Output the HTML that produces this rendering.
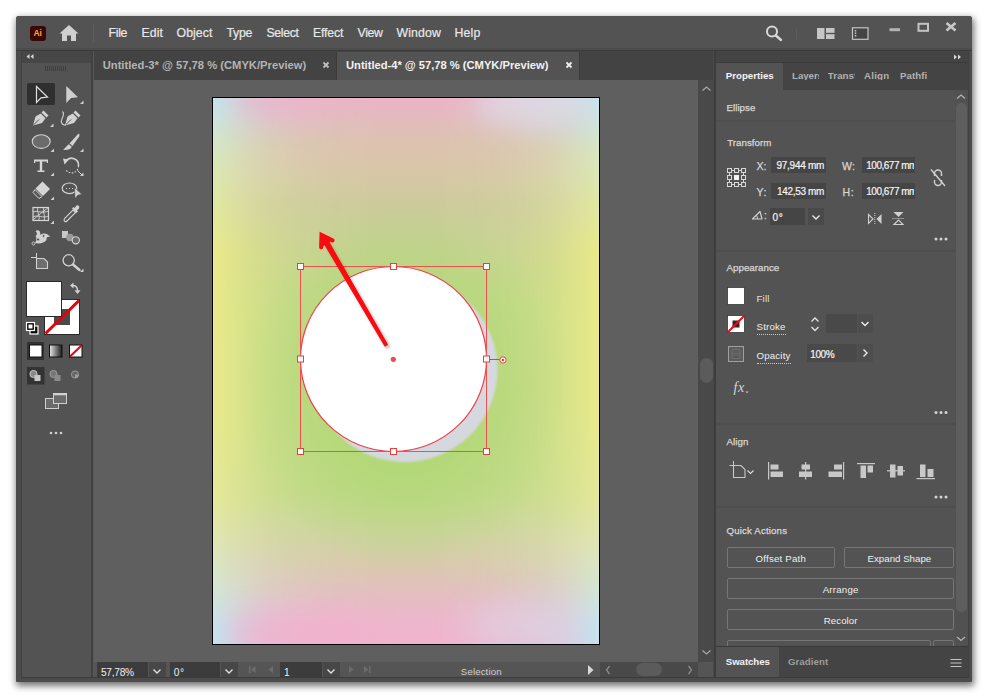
<!DOCTYPE html>
<html lang="en">
<head>
<meta charset="utf-8">
<title>Adobe Illustrator</title>
<style>
html,body{margin:0;padding:0;}
body{width:988px;height:698px;background:#fff;overflow:hidden;position:relative;font-family:"Liberation Sans",sans-serif;font-size:11px;color:#dcdcdc;}
.a{position:absolute;}
.t{position:absolute;white-space:nowrap;line-height:1;}
.win{left:16px;top:16px;width:956px;height:666px;background:#4b4b4b;border-radius:3px 3px 1px 1px;box-shadow:1px 3px 7px 1px rgba(0,0,0,.55);}
.menubar{left:16px;top:16px;width:956px;height:34px;background:#535353;border-radius:3px 3px 0 0;}
.mi{font-size:13px;top:26px;color:#e8e8e8;-webkit-text-stroke:.2px #e8e8e8;}
.pnl{background:#535353;}
.dk{background:#424242;}
.fld{background:#3c3c3c;}
.btn{border:1px solid #767676;border-radius:2px;box-sizing:border-box;text-align:center;color:#e8e8e8;}
.sec{color:#d8d8d8;font-size:11px;-webkit-text-stroke:.25px #d8d8d8;}
.lbl{color:#d6d6d6;font-size:10px;-webkit-text-stroke:.25px #d6d6d6;}
.val{color:#f4f4f4;font-size:10px;-webkit-text-stroke:.2px #f4f4f4;}
</style>
</head>
<body>
<div class="a win"></div>
<div class="a menubar"></div>
<div class="a" style="left:16px;top:48px;width:956px;height:2px;background:#4c4c4c"></div>
<div class="a" style="left:16px;top:50px;width:956px;height:1px;background:#3b3b3b"></div>

<!-- MENU -->
<div id="menu">
<svg class="a" style="left:30px;top:26px" width="16" height="15" viewBox="0 0 16 15"><rect x="0" y="0" width="16" height="15" rx="3" fill="#3a0606"/><text x="3.400" y="10.300" font-family="Liberation Sans, sans-serif" font-weight="bold" font-size="8.500" fill="#ffa826">Ai</text></svg>
<svg class="a" style="left:59px;top:24px" width="20" height="18" viewBox="0 0 20 18"><path d="M10 1 L0.5 9.5 L3 9.5 L3 17 L8 17 L8 11.5 L12 11.5 L12 17 L17 17 L17 9.5 L19.5 9.5 Z" fill="#d0d0d0"/></svg>
<div class="a" style="left:93px;top:24px;width:1px;height:18px;background:#5e5e5e"></div>
<svg class="a" style="left:760px;top:16px" width="212" height="34" viewBox="760 16 212 34">
 <circle cx="772" cy="31.500" r="5" fill="none" stroke="#d8d8d8" stroke-width="2"/>
 <path d="M775.800 35.500 L781 40" stroke="#d8d8d8" stroke-width="2.400" stroke-linecap="round"/>
 <path d="M796.500 28v12" stroke="#5c5c5c" stroke-width="1"/>
 <g fill="#c6c6c6"><rect x="817" y="28" width="7.500" height="11"/><rect x="826" y="28" width="8.500" height="4.800"/><rect x="826" y="34.200" width="8.500" height="4.800"/></g>
 <rect x="852.500" y="27.800" width="15.500" height="11.500" fill="#444" stroke="#c6c6c6" stroke-width="1.200"/>
 <path d="M855.500 30v7" stroke="#c6c6c6" stroke-width="1.600" stroke-dasharray="1.500 1"/>
 <rect x="889.500" y="28.200" width="10.500" height="3" fill="#b4b4b4"/>
 <rect x="918.500" y="23.800" width="9.500" height="7" fill="none" stroke="#c4c4c4" stroke-width="2"/>
 <path d="M946.500 23 L955.500 30.500 M955.500 23 L946.500 30.500" stroke="#c8c8c8" stroke-width="2.600"/>
</svg>
<span class="t mi" id="m0" style="left:108.50px;font-size:12.30px;letter-spacing:-0.309px;top:26.59px">File</span>
<span class="t mi" id="m1" style="left:141.50px;font-size:12.30px;letter-spacing:0.066px;top:26.59px">Edit</span>
<span class="t mi" id="m2" style="left:176.50px;font-size:12.30px;letter-spacing:0.071px;top:26.59px">Object</span>
<span class="t mi" id="m3" style="left:226.50px;font-size:12.30px;letter-spacing:-0.257px;top:26.59px">Type</span>
<span class="t mi" id="m4" style="left:266.50px;font-size:12.30px;letter-spacing:-0.358px;top:26.59px">Select</span>
<span class="t mi" id="m5" style="left:313.00px;font-size:12.30px;letter-spacing:-0.164px;top:26.59px">Effect</span>
<span class="t mi" id="m6" style="left:357.50px;font-size:12.30px;letter-spacing:-0.346px;top:26.59px">View</span>
<span class="t mi" id="m7" style="left:396.50px;font-size:12.30px;letter-spacing:0.130px;top:26.59px">Window</span>
<span class="t mi" id="m8" style="left:454.50px;font-size:12.30px;letter-spacing:0.201px;top:26.59px">Help</span>
</div>

<!-- TOOLBAR -->
<div id="toolbar">
<div class="a" style="left:21px;top:51px;width:72px;height:627px;background:#414141"></div>
<div class="a dk" style="left:22px;top:51px;width:69px;height:12px;background:#464646"></div>
<div class="a pnl" style="left:22px;top:63px;width:69px;height:614px"></div>
<div class="a" style="left:93px;top:51px;width:1px;height:627px;background:#585858"></div>
<svg class="a" style="left:16px;top:50px" width="80" height="632" viewBox="16 50 80 632">
 <!-- collapse chevrons -->
 <path d="M29.5 54 L26.5 56.5 L29.5 59 Z M33.5 54 L30.5 56.5 L33.5 59 Z" fill="#d8d8d8"/>
 <!-- grip -->
 <g stroke="#3e3e3e" stroke-width="1"><path d="M45.5 66V71M47.5 66V71M49.5 66V71M51.5 66V71M53.5 66V71M55.5 66V71M57.5 66V71M59.5 66V71M61.5 66V71M63.5 66V71M65.5 66V71"/></g>
 <!-- selection tool -->
 <rect x="27" y="83" width="28" height="22" rx="2" fill="#2f2f2f"/>
 <path d="M36.5 86.5 L47.5 97 L41 97.8 L36.5 102.5 Z" fill="none" stroke="#e0e0e0" stroke-width="1.2" stroke-linejoin="miter"/>
 <!-- direct selection -->
 <path d="M66.3 86 L78 97.3 L71 98 L66.3 103 Z" fill="#cfcfcf"/>
 <path d="M83.5 100.5V104H80Z" fill="#d0d0d0"/>
 <!-- pen -->
 <g fill="#d2d2d2">
 <path d="M43.5 110.5 L48.5 115.5 L46.5 117.5 L41.5 112.5 Z"/>
 <path d="M40.8 113.5 L45.5 118.2 L42 123 L33 125.5 L35.5 116.5 Z"/>
 <path d="M53.5 123.5V127H50Z"/>
 </g>
 <path d="M33.5 125 L39 119.5" stroke="#535353" stroke-width="1"/>
 <!-- curvature -->
 <g fill="#d2d2d2">
 <path d="M75.5 110.5 L80.5 115.5 L78.5 117.5 L73.5 112.5 Z"/>
 <path d="M72.8 113.5 L77.5 118.2 L74 123 L65 125.5 L67.5 116.5 Z"/>
 </g>
 <path d="M65.5 125 L71 119.5" stroke="#535353" stroke-width="1"/>
 <path d="M62.5 111.5 C66 115 60 119 61.5 122.5 C62.5 125 64.5 125.5 66 124.5" fill="none" stroke="#d2d2d2" stroke-width="1.1"/>
 <!-- ellipse -->
 <ellipse cx="41.2" cy="141.6" rx="9" ry="6.8" fill="#6b6b6b" stroke="#d0d0d0" stroke-width="1.1"/>
 <path d="M54 148.5V152H50.5Z" fill="#d0d0d0"/>
 <!-- paintbrush -->
 <g fill="#d2d2d2">
 <path d="M78.5 133.5 C79.5 134 79.8 135 79.2 136.5 L72.5 146 L69.5 143.5 Z"/>
 <path d="M68.8 144.3 L71.8 146.8 C71 149.5 67 150.2 63 149.8 C65.5 148.5 66 146 68.8 144.3 Z"/>
 <path d="M83.5 148.5V152H80Z"/>
 </g>
 <!-- type -->
 <path d="M34 159.5 H48 V163 H46.8 V161.5 H42.2 V170.5 H44.5 V172 H37.5 V170.5 H39.8 V161.5 H35.2 V163 H34 Z" fill="#d6d6d6"/>
 <path d="M54 172.5V176H50.5Z" fill="#d0d0d0"/>
 <!-- rotate -->
 <path d="M66 161 A7 7 0 0 1 78.5 166" fill="none" stroke="#d2d2d2" stroke-width="1.6"/>
 <path d="M78.5 166 A7 7 0 0 1 65.5 169.5" fill="none" stroke="#d2d2d2" stroke-width="1.2" stroke-dasharray="1.5 1.5"/>
 <path d="M63 158.5 L69 159.5 L64.5 164.5 Z" fill="#d2d2d2"/>
 <path d="M77.5 170.5 L82 175" stroke="#d2d2d2" stroke-width="1"/>
 <path d="M83.5 172.5V176H80Z" fill="#d0d0d0"/>
 <!-- eraser -->
 <path d="M42.5 181.5 L50 189 L43 196 L35.5 188.5 Z" fill="#d6d6d6"/>
 <path d="M35 189.5 L42 196.5 L39 198.5 L33 192.5 Z" fill="#5a5a5a" stroke="#d6d6d6" stroke-width="1"/>
 <path d="M54 196.500V200H50.500Z" fill="#d0d0d0"/>
 <!-- shape builder -->
 <ellipse cx="69.5" cy="188.3" rx="7.3" ry="5.3" fill="none" stroke="#d2d2d2" stroke-width="1.2"/>
 <path d="M66 188.5h1M69 188.500h1M72 188.500h1" stroke="#d2d2d2" stroke-width="1.2"/>
 <path d="M74.5 187.500 L82 194.500 L78 195 L75 198.500 Z" fill="#d2d2d2" stroke="#535353" stroke-width=".6"/>
 <!-- mesh -->
 <rect x="33" y="207.500" width="15.5" height="13" fill="#5c5c5c" stroke="#d6d6d6" stroke-width="1.2"/>
 <path d="M33 212 C38 210 42 214 48.500 211 M33 217 C38 214 43 219 48.500 216 M38 207.500 C36 212 41 216 38.500 220.500 M44 207.500 C42 212 46 216 44 220.500 M33 220 L41 213 L48 208" fill="none" stroke="#d6d6d6" stroke-width=".9"/>
 <path d="M54 220.500V224H50.500Z" fill="#d0d0d0"/>
 <!-- eyedropper -->
 <path d="M76.500 205.500 C78.500 204.500 80 206.500 79 208.500 L77 210.500 L78 211.500 L76.500 213 L72 208.500 L73.500 207 L74.500 208 Z" fill="#d2d2d2"/>
 <path d="M73 210 L75.500 212.500 L67 221 C65.500 222.500 63 221 64.500 218.500 Z" fill="#535353" stroke="#d2d2d2" stroke-width="1.1"/>
 <!-- puppet warp -->
 <path d="M35.500 231 C39 229 41 232 40 235 C43 232.500 47 233 50.500 237 C48 236 46 237 46.500 240 C44 243 40 244 35 243 C37 240 37 238 35.500 236 C37.500 235 37.500 233 35.500 231 Z" fill="#d2d2d2"/>
 <circle cx="38" cy="239.500" r="1.600" fill="#535353" stroke="#d2d2d2" stroke-width=".9"/>
 <circle cx="43.500" cy="236" r="1.400" fill="#535353" stroke="#d2d2d2" stroke-width=".9"/>
 <circle cx="33.500" cy="243.500" r="1.500" fill="#535353" stroke="#d2d2d2" stroke-width=".9"/>
 <!-- blend -->
 <rect x="62" y="231" width="6" height="7" fill="#c8c8c8"/>
 <circle cx="70" cy="237.500" r="3.800" fill="#9a9a9a"/>
 <circle cx="75.800" cy="240.300" r="3.600" fill="#6a6a6a" stroke="#d6d6d6" stroke-width="1.100"/>
 <!-- artboard -->
 <path d="M36.500 253V259M31 257.500H36" stroke="#d2d2d2" stroke-width="1"/>
 <path d="M36.500 258.500 H44 L47.500 262 V268.500 H36.500 Z" fill="#6e6e6e" stroke="#d2d2d2" stroke-width="1.100"/>
 <!-- zoom -->
 <circle cx="68.700" cy="260.300" r="5.600" fill="none" stroke="#d2d2d2" stroke-width="1.300"/>
 <path d="M73 264.500 L79.500 270" stroke="#d2d2d2" stroke-width="2.400" stroke-linecap="round"/>
 <path d="M83.500 268.500V272H80Z" fill="#d0d0d0"/>
 <!-- fill / stroke -->
 <rect x="44.500" y="299.500" width="35" height="35" fill="#fff" stroke="#2a2a2a" stroke-width="1"/>
 <rect x="54" y="309" width="16" height="16" fill="#4a4a4a"/>
 <path d="M45.500 333.500 L79 300.500" stroke="#e60008" stroke-width="3"/>
 <rect x="26.500" y="281.500" width="35" height="35" fill="#fff" stroke="#2a2a2a" stroke-width="1"/>
 <!-- swap -->
 <path d="M72.500 285.500 C76 285.500 77.500 287 77.500 290.500" fill="none" stroke="#d2d2d2" stroke-width="1.500"/>
 <path d="M70 285.500 L73.500 282.500 V288.500 Z M77.500 294 L74.500 290.200 H80.500 Z" fill="#d2d2d2"/>
 <!-- default fill stroke -->
 <rect x="30" y="326" width="8" height="8" fill="#0a0a0a" stroke="#fff" stroke-width="1.200"/>
 <rect x="26.500" y="322.500" width="8" height="8" fill="#0a0a0a" stroke="#fff" stroke-width="1.200"/>
 <rect x="28.500" y="324.500" width="4" height="4" fill="#fff"/>
 <!-- color / gradient / none -->
 <defs><linearGradient id="g1" x1="0" x2="1" y1="0" y2="0"><stop offset="0" stop-color="#e8e8e8"/><stop offset="1" stop-color="#1a1a1a"/></linearGradient></defs>
 <rect x="27" y="342" width="17" height="18" fill="#333"/>
 <rect x="29.500" y="345" width="12.500" height="12" fill="#fff" stroke="#111" stroke-width="1"/>
 <rect x="49.500" y="345" width="12.500" height="12" fill="url(#g1)" stroke="#111" stroke-width="1"/>
 <rect x="69.500" y="345" width="12.500" height="12" fill="#fff" stroke="#111" stroke-width="1"/>
 <path d="M70 356.500 L81.500 345.500" stroke="#e8000c" stroke-width="2"/>
 <!-- draw modes -->
 <rect x="27" y="367" width="17.500" height="17.500" fill="#333"/>
 <circle cx="33.500" cy="374" r="3.600" fill="#888" stroke="#c8c8c8" stroke-width="1"/>
 <rect x="34.500" y="375" width="6" height="6" fill="#c8c8c8"/>
 <circle cx="53.500" cy="374" r="3.600" fill="#777" stroke="#9a9a9a" stroke-width="1"/>
 <rect x="54.500" y="375" width="6" height="6" fill="#8a8a8a"/>
 <circle cx="75" cy="374.500" r="3.600" fill="#666" stroke="#9a9a9a" stroke-width="1"/>
 <path d="M75 374.500 h3.500 a3.500 3.500 0 0 1 -3.500 3.500Z" fill="#a0a0a0"/>
 <!-- screen mode -->
 <rect x="45.500" y="398.500" width="13" height="10" fill="#6a6a6a" stroke="#d0d0d0" stroke-width="1"/>
 <rect x="53.500" y="393.500" width="13" height="10" fill="#6a6a6a" stroke="#d0d0d0" stroke-width="1"/>
 <path d="M53.500 394.500h13" stroke="#d0d0d0" stroke-width="1.600"/>
 <!-- more -->
 <circle cx="51" cy="433" r="1.300" fill="#d0d0d0"/><circle cx="56" cy="433" r="1.300" fill="#d0d0d0"/><circle cx="61" cy="433" r="1.300" fill="#d0d0d0"/>
</svg>
</div>

<!-- DOC TABS -->
<div id="tabs">
<div class="a" style="left:94px;top:51px;width:619px;height:29px;background:#434343"></div>
<div class="a pnl" style="left:337px;top:52px;width:242px;height:28px"></div>
<div class="a" style="left:336px;top:52px;width:1px;height:28px;background:#3a3a3a"></div>
<div class="a" style="left:579px;top:52px;width:1px;height:28px;background:#3a3a3a"></div>
<span class="t" id="tab1" style="left:102.70px;top:59.52px;font-size:11.20px;font-weight:bold;color:#b4b4b4;letter-spacing:0.014px">Untitled-3* @ 57,78 % (CMYK/Preview)</span>
<span class="t" id="tab2" style="left:346.00px;top:59.52px;font-size:11.20px;font-weight:bold;color:#f2f2f2;letter-spacing:-0.018px">Untitled-4* @ 57,78 % (CMYK/Preview)</span>
<svg class="a" style="left:320px;top:58px" width="260" height="14" viewBox="320 58 260 14"><path d="M323.5 62.500l5 5m0-5l-5 5" stroke="#c0c0c0" stroke-width="1.800"/><path d="M566.500 62.500l5 5m0-5l-5 5" stroke="#f0f0f0" stroke-width="1.800"/></svg>
</div>

<!-- CANVAS -->
<div id="canvas">
<div class="a" style="left:94px;top:80px;width:604px;height:582px;background:#5f5f5f"></div>
<div class="a" style="left:698px;top:80px;width:16px;height:582px;background:#494949"></div>
<div class="a" style="left:699.500px;top:357.500px;width:13.500px;height:25.500px;border-radius:6.500px;background:#5b5b5b"></div>
<svg class="a" style="left:698px;top:80px" width="15" height="582" viewBox="698 80 15 582"><path d="M702.500 90.500l4-3.500l4 3.500M702.500 650.500l4 3.500l4-3.500" fill="none" stroke="#a8a8a8" stroke-width="1.300"/></svg>
<svg class="a" style="left:212px;top:97px" width="388" height="548" viewBox="212 97 388 548">
<defs>
 <linearGradient id="edge" x1="0" y1="0" x2="0" y2="1">
  <stop offset="0" stop-color="#c4e4ee"/><stop offset="0.04" stop-color="#cce6e0"/><stop offset="0.1" stop-color="#d8e8c0"/><stop offset="0.19" stop-color="#e2e8a4"/><stop offset="0.28" stop-color="#eaea8a"/><stop offset="0.6" stop-color="#eaea8c"/><stop offset="0.74" stop-color="#e6e89c"/><stop offset="0.82" stop-color="#e0e6b8"/><stop offset="0.9" stop-color="#d4e6d6"/><stop offset="0.96" stop-color="#c8e4ee"/><stop offset="1" stop-color="#c4e4f2"/>
 </linearGradient>
 <linearGradient id="mid" x1="0" y1="0" x2="0" y2="1">
  <stop offset="0" stop-color="#ecb2c6"/><stop offset="0.04" stop-color="#e3bbbd"/><stop offset="0.077" stop-color="#dcc2b0"/><stop offset="0.114" stop-color="#dac4ac"/><stop offset="0.152" stop-color="#d4c8a4"/><stop offset="0.196" stop-color="#ccca9c"/><stop offset="0.242" stop-color="#c8ce98"/><stop offset="0.297" stop-color="#c4d292"/><stop offset="0.34" stop-color="#c0d58c"/><stop offset="0.4" stop-color="#bed888"/><stop offset="0.68" stop-color="#bed988"/><stop offset="0.72" stop-color="#c0d88a"/><stop offset="0.76" stop-color="#c6d694"/><stop offset="0.8" stop-color="#ced2a0"/><stop offset="0.84" stop-color="#d6ccaa"/><stop offset="0.88" stop-color="#dec4b6"/><stop offset="0.92" stop-color="#e6bcc4"/><stop offset="0.96" stop-color="#eeb6cc"/><stop offset="1" stop-color="#f0b4cc"/>
 </linearGradient>
 <linearGradient id="hm" x1="0" y1="0" x2="1" y2="0">
  <stop offset="0" stop-color="#fff" stop-opacity="0"/><stop offset="0.04" stop-color="#fff" stop-opacity="0.2"/><stop offset="0.09" stop-color="#fff" stop-opacity="0.45"/><stop offset="0.15" stop-color="#fff" stop-opacity="0.68"/><stop offset="0.23" stop-color="#fff" stop-opacity="0.86"/><stop offset="0.32" stop-color="#fff" stop-opacity="0.96"/><stop offset="0.42" stop-color="#fff" stop-opacity="1"/><stop offset="0.58" stop-color="#fff" stop-opacity="1"/><stop offset="0.68" stop-color="#fff" stop-opacity="0.96"/><stop offset="0.77" stop-color="#fff" stop-opacity="0.86"/><stop offset="0.85" stop-color="#fff" stop-opacity="0.68"/><stop offset="0.91" stop-color="#fff" stop-opacity="0.45"/><stop offset="0.96" stop-color="#fff" stop-opacity="0.2"/><stop offset="1" stop-color="#fff" stop-opacity="0"/>
 </linearGradient>
 <mask id="mk"><rect x="213" y="98" width="386" height="546" fill="url(#hm)"/></mask>
 <radialGradient id="grn" cx="405" cy="385" r="1" gradientUnits="userSpaceOnUse" gradientTransform="translate(405 385) scale(165 185) translate(-405 -385)">
  <stop offset="0" stop-color="#b1d874" stop-opacity=".95"/><stop offset=".45" stop-color="#b1d874" stop-opacity=".8"/><stop offset=".75" stop-color="#b4d878" stop-opacity=".35"/><stop offset="1" stop-color="#b8d880" stop-opacity="0"/>
 </radialGradient>
 <clipPath id="abclip"><rect x="213" y="98" width="386" height="546"/></clipPath>
 <filter id="bl3" x="-50%" y="-100%" width="200%" height="300%"><feGaussianBlur stdDeviation="14"/></filter>
 <filter id="bl" x="-10%" y="-10%" width="120%" height="120%"><feGaussianBlur stdDeviation="1.2"/></filter>
 <filter id="bl2" x="-20%" y="-20%" width="140%" height="140%"><feGaussianBlur stdDeviation="1.5"/></filter>
</defs>
<rect x="212.500" y="97.500" width="387" height="547" fill="url(#edge)" stroke="#000" stroke-width="1"/>
<rect x="213" y="98" width="386" height="546" fill="url(#mid)" mask="url(#mk)"/>
<ellipse cx="405" cy="385" rx="165" ry="185" fill="url(#grn)"/>
<g clip-path="url(#abclip)" filter="url(#bl3)">
 <ellipse cx="285" cy="100" rx="45" ry="16" fill="#ecb2c8" opacity=".75"/>
 <ellipse cx="532" cy="104" rx="60" ry="22" fill="#dcdee8" opacity=".8"/>
 <ellipse cx="300" cy="634" rx="70" ry="22" fill="#f2aecb" opacity=".7"/>
 <ellipse cx="520" cy="626" rx="55" ry="24" fill="#dcd6e4" opacity=".55"/>
</g>
<rect x="212.500" y="97.500" width="387" height="547" fill="none" stroke="#000" stroke-width="1"/>
<!-- shadow circle -->
<ellipse cx="404.500" cy="369.500" rx="93" ry="92.500" fill="#d5d8de" filter="url(#bl)"/>
<ellipse cx="393.500" cy="359" rx="93" ry="92.500" fill="#fff"/>
<ellipse cx="393.500" cy="359" rx="93" ry="92.500" fill="none" stroke="#f0404a" stroke-width="1.200"/>
<rect x="300.500" y="266.500" width="186" height="185" fill="none" stroke="#f0504e" stroke-width="1"/>
<g fill="#fff" stroke="#e8403c" stroke-width="1">
 <rect x="297.500" y="263.500" width="6" height="6"/><rect x="390.500" y="263.500" width="6" height="6"/><rect x="483.500" y="263.500" width="6" height="6"/>
 <rect x="297.500" y="356" width="6" height="6"/><rect x="483.500" y="356" width="6" height="6"/>
 <rect x="297.500" y="448.500" width="6" height="6"/><rect x="390.500" y="448.500" width="6" height="6"/><rect x="483.500" y="448.500" width="6" height="6"/>
</g>
<path d="M490 359.500H499.500" stroke="#e8403c" stroke-width="1"/>
<circle cx="503" cy="360" r="3.200" fill="#fff" stroke="#e8403c" stroke-width="1"/>
<circle cx="503" cy="360" r="1.300" fill="#e8403c"/>
<circle cx="393.300" cy="359.300" r="2.600" fill="#f04a50"/>
<!-- arrow -->
<g filter="url(#bl2)" opacity=".3"><path d="M388.500 348 L326 241" stroke="#300" stroke-width="4.500"/></g>
<path d="M387.300 344.600 L385 346 L320.800 237.600 L324.800 235.300 Z" fill="#fb0a10" stroke="#fb0a10" stroke-width="1.200" stroke-linejoin="round"/>
<path d="M332.500 240.300 L321.600 235 L321.200 247.300" fill="#fb0a10" stroke="#fb0a10" stroke-width="4.200" stroke-linecap="round" stroke-linejoin="miter"/>
</svg>
</div>

<!-- STATUS -->
<div id="status">
<div class="a" style="left:94px;top:662px;width:619px;height:15px;background:#555"></div>
<div class="a fld" style="left:97px;top:662px;width:51px;height:15px"></div>
<div class="a" style="left:149px;top:662px;width:17px;height:15px;background:#474747"></div>
<div class="a fld" style="left:170px;top:662px;width:50px;height:15px"></div>
<div class="a" style="left:221px;top:662px;width:17px;height:15px;background:#474747"></div>
<div class="a fld" style="left:280px;top:662px;width:42px;height:15px"></div>
<div class="a" style="left:323px;top:662px;width:17px;height:15px;background:#474747"></div>
<div class="a" style="left:600px;top:662px;width:98px;height:15px;background:#494949"></div>
<div class="a" style="left:636px;top:663px;width:26px;height:13px;border-radius:7px;background:#5b5b5b"></div>
<span class="t" id="st0" style="left:100.90px;top:668.37px;font-size:10.20px;color:#efefef;letter-spacing:-0.252px">57,78%</span>
<span class="t" id="st1" style="left:173.80px;top:668.37px;font-size:10.20px;color:#efefef;letter-spacing:0.600px">0°</span>
<span class="t" id="st2" style="left:284.00px;top:668.37px;font-size:10.20px;color:#efefef;letter-spacing:0.000px">1</span>
<span class="t" id="sel" style="left:460.80px;top:666.79px;font-size:9.70px;color:#d0d0d0;letter-spacing:0.118px">Selection</span>
<svg class="a" style="left:94px;top:662px" width="619" height="15" viewBox="94 662 619 15">
 <g fill="none" stroke="#e0e0e0" stroke-width="1.400"><path d="M153.500 669.500l3.500 3.500l3.500-3.500M225.500 669.500l3.500 3.500l3.500-3.500M327.500 669.500l3.500 3.500l3.500-3.500"/></g>
 <g fill="#6c6c6c"><path d="M249 666h1.500v7H249zM255.500 666v7l-4.500-3.500zM273 666v7l-4.500-3.500zM349 666v7l4.500-3.500zM364 666v7l4.500-3.500zM369 666h1.500v7H369z"/></g>
 <path d="M588 665v10l5.500-5z" fill="#d8d8d8"/>
 <path d="M609.500 666l-3 4l3 4M688.500 666l3 4l-3 4" fill="none" stroke="#8a8a8a" stroke-width="1.300"/>
</svg>
</div>

<!-- RIGHT PANELS -->
<div id="panels">
<div class="a" style="left:714px;top:51px;width:3px;height:627px;background:#3d3d3d"></div>
<div class="a" style="left:716px;top:51px;width:252px;height:39px;background:#444"></div>
<div class="a" style="left:716px;top:62px;width:252px;height:1px;background:#3a3a3a"></div>
<div class="a pnl" style="left:716px;top:63px;width:67px;height:28px"></div>
<div class="a pnl" style="left:716px;top:90px;width:252px;height:556px"></div>
<!-- panel scrollbar -->
<div class="a" style="left:955px;top:90px;width:13px;height:556px;background:#515151"></div>
<div class="a" style="left:956px;top:103px;width:11px;height:509px;border-radius:5px;background:#5e5e5e"></div>
<!-- separators -->
<div class="a" style="left:716px;top:120px;width:239px;height:2px;background:#4e4e4e"></div>
<div class="a" style="left:716px;top:250px;width:239px;height:2px;background:#4e4e4e"></div>
<div class="a" style="left:716px;top:423px;width:239px;height:2px;background:#4e4e4e"></div>
<div class="a" style="left:716px;top:506px;width:239px;height:2px;background:#4e4e4e"></div>
<!-- tabs text -->
<span class="t" id="pt0" style="left:725.80px;top:70.79px;font-size:9.70px;font-weight:bold;color:#f4f4f4;letter-spacing:-0.002px">Properties</span>
<span class="t" id="pt1" style="left:792.10px;top:70.79px;font-size:9.70px;font-weight:bold;color:#b2b2b2;width:27px;overflow:hidden;letter-spacing:-0.070px">Layers</span>
<span class="t" id="pt2" style="left:827.80px;top:70.79px;font-size:9.70px;font-weight:bold;color:#b2b2b2;width:27px;overflow:hidden;letter-spacing:0.091px">Transform</span>
<span class="t" id="pt3" style="left:864.00px;top:70.79px;font-size:9.70px;font-weight:bold;color:#b2b2b2;width:27px;overflow:hidden;letter-spacing:0.245px">Align</span>
<span class="t" id="pt4" style="left:900.10px;top:70.79px;font-size:9.70px;font-weight:bold;color:#b2b2b2;width:27px;overflow:hidden;letter-spacing:0.044px">Pathfinder</span>
<!-- section titles -->
<span class="t sec" id="s0" style="left:726.60px;top:102.69px;font-size:9.70px;letter-spacing:0.026px">Ellipse</span>
<span class="t sec" id="s1" style="left:727.20px;top:137.79px;font-size:9.70px;letter-spacing:0.052px">Transform</span>
<span class="t sec" id="s2" style="left:726.50px;top:263.49px;font-size:9.70px;letter-spacing:0.050px">Appearance</span>
<span class="t sec" id="s3" style="left:726.50px;top:436.79px;font-size:9.70px;letter-spacing:0.088px">Align</span>
<span class="t sec" id="s4" style="left:726.50px;top:525.79px;font-size:9.70px;letter-spacing:0.151px">Quick Actions</span>
<!-- transform fields -->
<div class="a" style="left:771px;top:157px;width:55px;height:16px;background:#454545"></div>
<div class="a" style="left:771px;top:183px;width:55px;height:16px;background:#454545"></div>
<div class="a" style="left:862px;top:157px;width:53px;height:16px;background:#454545"></div>
<div class="a" style="left:862px;top:183px;width:53px;height:16px;background:#454545"></div>
<div class="a" style="left:770px;top:208px;width:35px;height:17px;background:#454545"></div>
<div class="a" style="left:808px;top:208px;width:16px;height:17px;background:#4a4a4a"></div>
<span class="t lbl" id="lx" style="left:756.50px;top:161.11px;font-size:10.50px;letter-spacing:-0.022px">X:</span>
<span class="t lbl" id="ly" style="left:756.50px;top:186.91px;font-size:10.50px;letter-spacing:0.556px">Y:</span>
<span class="t lbl" id="lw" style="left:841.90px;top:160.61px;font-size:10.50px;letter-spacing:0.459px">W:</span>
<span class="t lbl" id="lh" style="left:842.50px;top:186.91px;font-size:10.50px;letter-spacing:0.600px">H:</span>
<span class="t val" id="vx" style="left:776.50px;top:160.73px;font-size:10.00px;letter-spacing:-0.266px">97,944 mm</span>
<span class="t val" id="vy" style="left:777.00px;top:186.53px;font-size:10.00px;letter-spacing:-0.329px">142,53 mm</span>
<span class="t val" id="vw" style="left:866.30px;top:160.53px;width:48px;overflow:hidden;font-size:10.00px;letter-spacing:-0.499px">100,677 mm</span>
<span class="t val" id="vh" style="left:866.30px;top:186.53px;width:48px;overflow:hidden;font-size:10.00px;letter-spacing:-0.499px">100,677 mm</span>
<span class="t val" id="va" style="left:772.50px;top:213.34px;font-size:10.00px;letter-spacing:0.600px">0°</span>
<span class="t lbl" style="left:764px;top:211px">:</span>
<!-- appearance -->
<div class="a" style="left:826px;top:314px;width:31px;height:19px;background:#494949"></div>
<div class="a" style="left:858px;top:314px;width:15px;height:19px;background:#4d4d4d"></div>
<div class="a" style="left:807px;top:344px;width:50px;height:18px;background:#494949"></div>
<div class="a" style="left:858px;top:344px;width:15px;height:18px;background:#4d4d4d"></div>
<span class="t" id="afill" style="left:756.50px;top:293.59px;font-size:9.70px;color:#e0e0e0;letter-spacing:0.175px">Fill</span>
<span class="t" id="astroke" style="left:756.50px;top:322.49px;font-size:9.70px;color:#f0f0f0;border-bottom:1px dotted #c8c8c8;padding-bottom:2px;letter-spacing:0.180px">Stroke</span>
<span class="t" id="aopac" style="left:756.50px;top:351.39px;font-size:9.70px;color:#f0f0f0;border-bottom:1px dotted #c8c8c8;padding-bottom:2px;letter-spacing:0.176px">Opacity</span>
<span class="t val" id="a100" style="left:810.20px;top:350.34px;font-size:10.00px;letter-spacing:-0.359px">100%</span>
<span class="t" id="afx" style="left:733.50px;top:380.77px;font-size:14.00px;font-style:italic;color:#d8d8d8;font-family:'Liberation Serif',serif;letter-spacing:0.600px">fx</span>
<!-- quick action buttons -->
<div class="a btn" style="left:727px;top:547px;width:108px;height:21px"></div>
<div class="a btn" style="left:844px;top:547px;width:110px;height:21px"></div>
<div class="a btn" style="left:727px;top:578px;width:227px;height:21px"></div>
<div class="a btn" style="left:727px;top:609px;width:227px;height:21px"></div>
<div class="a" style="left:716px;top:640px;width:239px;height:6px;overflow:hidden"><div class="a btn" style="left:11px;top:0;width:204px;height:21px"></div><div class="a btn" style="left:217px;top:0;width:21px;height:21px"></div></div>
<span class="t" id="b0" style="left:755.60px;top:553.79px;font-size:9.70px;color:#f0f0f0;letter-spacing:0.200px">Offset Path</span>
<span class="t" id="b1" style="left:867.50px;top:553.79px;font-size:9.70px;color:#f0f0f0;letter-spacing:0.012px">Expand Shape</span>
<span class="t" id="b2" style="left:822.70px;top:584.59px;font-size:9.70px;color:#f0f0f0;letter-spacing:0.205px">Arrange</span>
<span class="t" id="b3" style="left:823.80px;top:615.79px;font-size:9.70px;color:#f0f0f0;letter-spacing:0.035px">Recolor</span>
<!-- swatches panel -->
<div class="a" style="left:716px;top:646px;width:252px;height:31px;background:#444"></div>
<div class="a" style="left:716px;top:646px;width:252px;height:1px;background:#3a3a3a"></div>
<div class="a pnl" style="left:716px;top:647px;width:63px;height:30px"></div>
<span class="t" id="sw0" style="left:725.80px;top:656.99px;font-size:9.70px;font-weight:bold;color:#f4f4f4;letter-spacing:-0.086px">Swatches</span>
<span class="t" id="sw1" style="left:787.90px;top:656.99px;font-size:9.70px;font-weight:bold;color:#9c9c9c;letter-spacing:0.065px">Gradient</span>
<div class="a" style="left:968px;top:51px;width:1px;height:627px;background:#3f3f3f"></div>
<div class="a" style="left:21px;top:677px;width:948px;height:1px;background:#3c3c3c"></div>
<svg class="a" style="left:716px;top:51px" width="252" height="627" viewBox="716 51 252 627">
 <!-- expand chevrons -->
 <path d="M954 54.500 L957 57 L954 59.500 Z M958 54.500 L961 57 L958 59.500 Z" fill="#d8d8d8"/>
 <!-- scrollbar chevrons -->
 <path d="M957 98.500l4-3.500l4 3.500M957 637l4 3.500l4-3.500" fill="none" stroke="#b4b4b4" stroke-width="1.300"/>
 <!-- reference point -->
 <g fill="none" stroke="#d8d8d8" stroke-width="1">
  <rect x="727.500" y="168.500" width="4" height="4"/><rect x="734.500" y="168.500" width="4" height="4"/><rect x="741.500" y="168.500" width="4" height="4"/>
  <rect x="727.500" y="175.500" width="4" height="4"/><rect x="741.500" y="175.500" width="4" height="4"/>
  <rect x="727.500" y="182.500" width="4" height="4"/><rect x="734.500" y="182.500" width="4" height="4"/><rect x="741.500" y="182.500" width="4" height="4"/>
  <path d="M731.500 170.500h3m4 0h3M731.500 184.500h3m4 0h3M729.500 172.500v3m0 4v3M743.500 172.500v3m0 4v3"/>
 </g>
 <rect x="734" y="175" width="5" height="5" fill="#f4f4f4"/>
 <!-- angle icon -->
 <path d="M752.500 219 L760 211.500 L762 219 Z" fill="none" stroke="#d0d0d0" stroke-width="1.200" stroke-linejoin="round"/>
 <path d="M756 215 A5 5 0 0 1 757.500 219" fill="none" stroke="#d0d0d0" stroke-width="1"/>
 <path d="M812.500 215.500l3.500 3.500l3.500-3.500" fill="none" stroke="#ececec" stroke-width="1.400"/>
 <!-- link -->
 <g fill="none" stroke="#d0d0d0" stroke-width="1.400">
  <path d="M934.500 176 v-2.500 a3.500 3.500 0 0 1 7 0 V176 M941.500 180 v2 a3.500 3.500 0 0 1 -7 0 V180"/>
  <path d="M931 169.500 L945 186"/>
 </g>
 <!-- flip h -->
 <path d="M868.500 214.500 L873 219 L868.500 223.500 Z" fill="none" stroke="#d0d0d0" stroke-width="1.100"/>
 <path d="M881.500 214 L876.500 219 L881.500 224 Z" fill="#d0d0d0"/>
 <path d="M874.800 213v12" stroke="#d0d0d0" stroke-width="1" stroke-dasharray="1 1"/>
 <!-- flip v -->
 <path d="M893.500 212 L898.500 217 L903.500 212 Z" fill="#d0d0d0"/>
 <path d="M894 224.500 L898.500 220 L903 224.500 Z" fill="none" stroke="#d0d0d0" stroke-width="1.100"/>
 <path d="M892.500 218.500h12" stroke="#d0d0d0" stroke-width="1" stroke-dasharray="1 1"/>
 <!-- more dots -->
 <g fill="#d4d4d4">
  <circle cx="936" cy="239" r="1.500"/><circle cx="941" cy="239" r="1.500"/><circle cx="946" cy="239" r="1.500"/>
  <circle cx="936" cy="412.500" r="1.500"/><circle cx="941" cy="412.500" r="1.500"/><circle cx="946" cy="412.500" r="1.500"/>
  <circle cx="936" cy="497" r="1.500"/><circle cx="941" cy="497" r="1.500"/><circle cx="946" cy="497" r="1.500"/>
 </g>
 <!-- fill swatch -->
 <rect x="727.500" y="287.500" width="17" height="17" fill="#fff" stroke="#3a3a3a" stroke-width=".800"/>
 <!-- stroke swatch -->
 <rect x="727.500" y="315.500" width="17" height="17" fill="#fff" stroke="#3a3a3a" stroke-width=".800"/>
 <rect x="732.500" y="320.500" width="7" height="7" fill="#2a2a2a"/>
 <path d="M728 332 L744 316" stroke="#ee0a14" stroke-width="2"/>
 <!-- opacity icon -->
 <rect x="728.500" y="346.500" width="15" height="15" fill="#5c5c5c" stroke="#a0a0a0" stroke-width="1"/>
 <path d="M732 349.500h8M732 354h8M732 358.500h8M732 349.500v9M740 349.500v9" stroke="#6e6e6e" stroke-width="1"/>
 <!-- stroke stepper -->
 <path d="M811.500 321.500l3.500-3.500l3.500 3.500M811.500 327l3.500 3.500l3.500-3.500" fill="none" stroke="#e4e4e4" stroke-width="1.300"/>
 <path d="M861.500 322l3.500 3.500l3.500-3.500" fill="none" stroke="#ececec" stroke-width="1.400"/>
 <path d="M863.500 349.500l3.500 3.500l-3.500 3.500" fill="none" stroke="#ececec" stroke-width="1.400"/>
 <path d="M745.500 391.500h3l-1.500 1.800z" fill="#d0d0d0"/>
 <!-- align icons -->
 <g fill="#c8c8c8" stroke="none">
  <path d="M733.500 465.500 H741 L745 469.500 V477.500 H733.500 Z" fill="none" stroke="#c8c8c8" stroke-width="1.100"/>
  <path d="M733.500 461v4M729.500 465.500h4" stroke="#c8c8c8" stroke-width="1" fill="none"/>
  <path d="M747.500 470.500l3 3l3-3" fill="none" stroke="#d8d8d8" stroke-width="1.200"/>
  <rect x="768" y="462" width="1.200" height="17.500"/><rect x="770.500" y="464.500" width="8" height="5"/><rect x="770.500" y="471.500" width="12.500" height="5.500"/>
  <rect x="805" y="462" width="1.200" height="17.500"/><rect x="801.500" y="464.500" width="8.500" height="5"/><rect x="799" y="471.500" width="13" height="5.500"/>
  <rect x="843" y="462" width="1.200" height="17.500"/><rect x="834" y="464.500" width="8" height="5"/><rect x="828.500" y="471.500" width="13.500" height="5.500"/>
  <rect x="857" y="463" width="18" height="1.200"/><rect x="860.500" y="465.500" width="5.500" height="12.500"/><rect x="867.500" y="465.500" width="5.500" height="7"/>
  <rect x="887" y="470.200" width="18" height="1.200"/><rect x="890" y="464.500" width="5.500" height="13"/><rect x="897.500" y="466" width="5.500" height="9.500"/>
  <rect x="916.500" y="478" width="18.500" height="1.200"/><rect x="920" y="464.500" width="5.500" height="12.500"/><rect x="927.500" y="469" width="6" height="8"/>
 </g>
 <!-- hamburger -->
 <path d="M950.500 659.500h11M950.500 663h11M950.500 666.500h11" stroke="#c4c4c4" stroke-width="1.200"/>
</svg>

</div>

</body>
</html>
